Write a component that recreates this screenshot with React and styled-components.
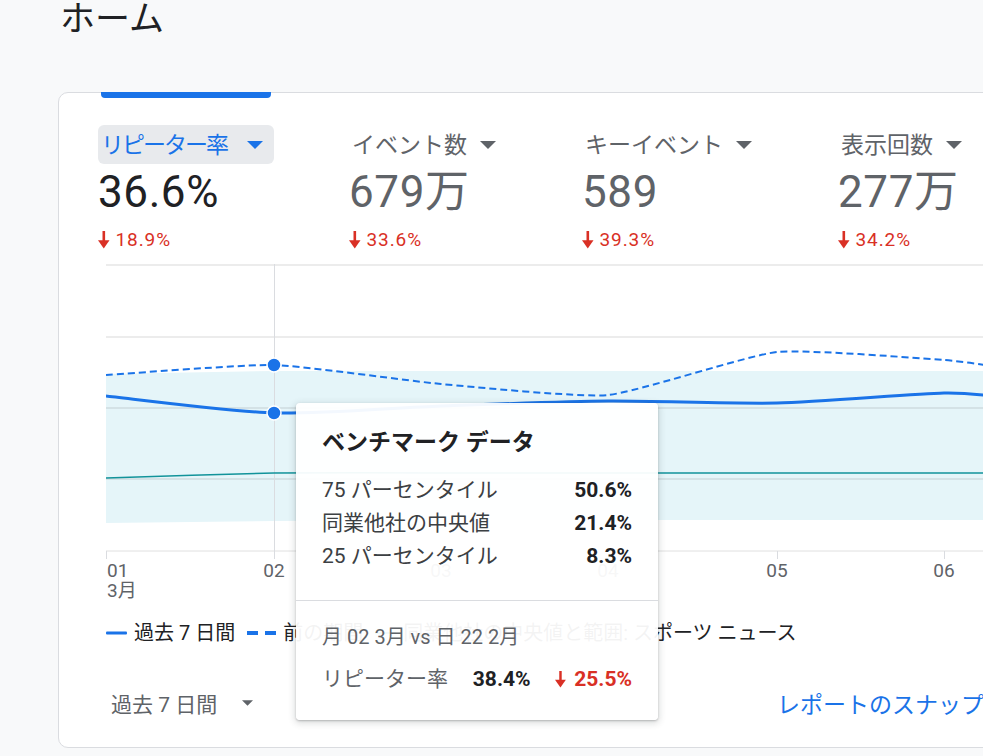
import React from 'react';
import styled, { createGlobalStyle } from 'styled-components';

const GlobalStyle = createGlobalStyle`
  html, body {
    margin: 0;
    padding: 0;
    background: #f8f9fa;
    overflow: hidden;
  }
  body {
    font-family: Roboto, "Noto Sans CJK JP", "Noto Sans", sans-serif;
    color: #202124;
  }
`;

const metrics = [
  { label: 'リピーター率', value: '36.6%', change: '18.9%', active: true },
  { label: 'イベント数', value: '679万', change: '33.6%' },
  { label: 'キーイベント', value: '589', change: '39.3%' },
  { label: '表示回数', value: '277万', change: '34.2%' },
];

const days = ['01', '02', '03', '04', '05', '06'];
const dayX = [0, 168, 335, 502, 671, 838];

const current = [[0, 132], [168, 149], [335, 142], [502, 137], [671, 139], [838, 129], [900, 134]];
const previous = [[0, 111], [168, 101], [335, 120], [502, 131], [671, 88], [838, 96], [900, 104]];
const median = [[0, 214], [168, 209], [335, 209], [502, 209], [671, 209], [838, 209], [900, 209]];
const bandTop = [[0, 110], [168, 107], [900, 107]];
const bandBottom = [[900, 256], [335, 256], [168, 257], [0, 259]];

// catmull-rom to bezier with a low tension, the chart lines are only softly rounded
const smooth = (pts, k = 12) => {
  let d = `M${pts[0][0]},${pts[0][1]}`;
  for (let i = 0; i < pts.length - 1; i++) {
    const p0 = pts[i - 1] || pts[i];
    const p1 = pts[i];
    const p2 = pts[i + 1];
    const p3 = pts[i + 2] || p2;
    const c1x = p1[0] + (p2[0] - p0[0]) / k;
    const c1y = p1[1] + (p2[1] - p0[1]) / k;
    const c2x = p2[0] - (p3[0] - p1[0]) / k;
    const c2y = p2[1] - (p3[1] - p1[1]) / k;
    d += ` C${c1x},${c1y} ${c2x},${c2y} ${p2[0]},${p2[1]}`;
  }
  return d;
};

const Page = styled.div`
  width: 983px;
  height: 756px;
  overflow: hidden;
  padding-left: 58px;
  box-sizing: border-box;
`;

const Title = styled.h1`
  margin: 0;
  padding-left: 2px;
  font-size: 35px;
  line-height: 40px;
  font-weight: 400;
  color: #202124;
`;

const Card = styled.section`
  margin-top: 52px;
  width: 1000px;
  height: 656px;
  box-sizing: border-box;
  background: #fff;
  border: 1px solid #dadce0;
  border-radius: 10px;
  display: flex;
  flex-direction: column;
`;

const TabIndicator = styled.div`
  margin: -1px 0 0 42px;
  width: 170px;
  height: 6px;
  background: #1a73e8;
  border-radius: 0 0 4px 4px;
`;

const Tabs = styled.div`
  display: flex;
  gap: 75px;
  margin: 27px 0 0 39px;
`;

const Tab = styled.div`
  display: flex;
  flex-direction: column;
  align-items: flex-start;
`;

const TabLabel = styled.div`
  display: inline-flex;
  align-items: center;
  box-sizing: border-box;
  height: 39px;
  padding: 0 11px 4px 3px;
  border-radius: 6px;
  background: ${(p) => (p.$active ? '#e8eaed' : 'transparent')};
  color: ${(p) => (p.$active ? '#1a73e8' : '#5f6368')};
  font-size: 23px;
  letter-spacing: ${(p) => (p.$active ? '-2px' : '0')};
  white-space: nowrap;

  svg {
    margin-left: ${(p) => (p.$active ? '20px' : '13px')};
    position: relative;
    top: 2px;
  }
`;

const Value = styled.div`
  margin-top: 4px;
  font-size: 44px;
  line-height: 48px;
  letter-spacing: 0.6px;
  color: ${(p) => (p.$active ? '#202124' : '#5f6368')};
  white-space: nowrap;
`;

const Change = styled.div`
  display: flex;
  align-items: center;
  gap: 6px;
  margin-top: 12px;
  font-size: 19px;
  line-height: 24px;
  letter-spacing: 0.9px;
  color: #d93025;
`;

const ChartWrap = styled.div`
  position: relative;
  margin: 12px 0 0 47px;
  height: 340px;
`;

const Tooltip = styled.div`
  position: absolute;
  z-index: 2;
  left: 190px;
  top: 139px;
  width: 362px;
  box-sizing: border-box;
  background: rgba(255, 255, 255, 0.95);
  border-radius: 4px;
  box-shadow: 0 1px 2px rgba(60, 64, 67, 0.3), 0 2px 6px 2px rgba(60, 64, 67, 0.15);
`;

const TipSection = styled.div`
  padding: ${(p) => (p.$footer ? '20px 26px 24px' : '24px 26px 27px')};
`;

const TipTitle = styled.div`
  font-size: 23px;
  line-height: 32px;
  font-weight: 700;
  color: #202124;
  margin-bottom: 15px;
`;

const TipRow = styled.div`
  display: flex;
  justify-content: space-between;
  align-items: center;
  font-size: 21px;
  line-height: 33px;
  color: ${(p) => (p.$muted ? '#5f6368' : '#3c4043')};
  margin-top: ${(p) => (p.$spaced ? '10px' : '0')};
  white-space: nowrap;
`;

const TipValue = styled.span`
  font-weight: 700;
  color: ${(p) => (p.$down ? '#d93025' : '#202124')};
  display: inline-flex;
  align-items: center;
  gap: 8px;
`;

const TipDivider = styled.div`
  height: 1px;
  background: #dadce0;
`;

const TipDate = styled.div`
  font-size: 20px;
  line-height: 32px;
  color: #5f6368;
`;

const Legend = styled.div`
  display: flex;
  align-items: center;
  gap: 12px;
  margin: 15px 0 0 47px;
  height: 28px;
  font-size: 20px;
  line-height: 28px;
  color: #202124;
  white-space: nowrap;
`;

const LegendItem = styled.div`
  display: flex;
  align-items: center;
  gap: 7px;
`;

const BottomRow = styled.div`
  display: grid;
  grid-template-columns: 718px auto;
  align-items: center;
  margin-top: 39px;
  height: 32px;
`;

const PeriodSelect = styled.div`
  display: flex;
  align-items: center;
  gap: 25px;
  padding-left: 52px;
  font-size: 21px;
  color: #5f6368;
`;

const SnapshotLink = styled.a`
  font-size: 23px;
  color: #1a73e8;
  text-decoration: none;
  white-space: nowrap;
`;

const Caret = ({ w = 16, h = 8, color }) => (
  <svg width={w} height={h} viewBox="0 0 16 8">
    <path d="M0 0h16L8 8z" fill={color} />
  </svg>
);

const DownArrow = ({ color = '#d93025', h = 18 }) => (
  <svg width={h * 0.64} height={h} viewBox="0 0 11.5 18">
    <rect x="4.5" y="0" width="2.6" height="11" fill={color} />
    <path d="M0 9.2h11.5L5.75 17.6z" fill={color} />
  </svg>
);

function Chart() {
  const band =
    'M' + bandTop.map((p) => p.join(',')).join(' L') + ' L' + bandBottom.map((p) => p.join(',')).join(' L') + ' Z';

  return (
    <svg width="900" height="340" style={{ display: 'block' }}>
      <path d={band} fill="#e5f5f9" />
      {[1, 73, 144, 215].map((y) => (
        <line key={y} x1="0" x2="900" y1={y} y2={y} stroke="rgba(0,0,0,0.1)" strokeWidth="1.4" />
      ))}
      <line x1="0" x2="900" y1="287" y2="287" stroke="#e0e0e0" strokeWidth="1" />
      {dayX.map((x) => (
        <line key={x} x1={x + 0.5} x2={x + 0.5} y1="287" y2="295" stroke="#dadce0" strokeWidth="1" />
      ))}
      <line x1="168.5" x2="168.5" y1="0" y2="287" stroke="#dadce0" strokeWidth="1" />
      <path d={smooth(median)} fill="none" stroke="#12939a" strokeWidth="1.5" />
      <path d={smooth(previous)} fill="none" stroke="#1a73e8" strokeWidth="2" strokeDasharray="7 4" />
      <path d={smooth(current, 8)} fill="none" stroke="#1a73e8" strokeWidth="3" />
      <circle cx="168" cy="101" r="7" fill="#1a73e8" stroke="#fff" strokeWidth="1.5" />
      <circle cx="168" cy="149" r="7" fill="#1a73e8" stroke="#fff" strokeWidth="1.5" />
      <g fontFamily="Roboto, sans-serif" fontSize="19" fill="#5f6368">
        {days.map((d, i) => (
          <text key={d} x={i === 0 ? 1 : dayX[i]} y="313" textAnchor={i === 0 ? 'start' : 'middle'}>
            {d}
          </text>
        ))}
        <text x="1" y="333" fontFamily='Roboto, "Noto Sans CJK JP", sans-serif'>3月</text>
      </g>
    </svg>
  );
}

export default function App() {
  return (
    <>
      <GlobalStyle />
      <Page>
        <Title>ホーム</Title>
        <Card>
          <TabIndicator />
          <Tabs>
            {metrics.map((m) => (
              <Tab key={m.label}>
                <TabLabel $active={m.active}>
                  {m.label}
                  <Caret color={m.active ? '#1a73e8' : '#5f6368'} />
                </TabLabel>
                <Value $active={m.active}>{m.value}</Value>
                <Change>
                  <DownArrow />
                  {m.change}
                </Change>
              </Tab>
            ))}
          </Tabs>

          <ChartWrap>
            <Chart />
            <Tooltip>
              <TipSection>
                <TipTitle>ベンチマーク データ</TipTitle>
                <TipRow>
                  <span>75 パーセンタイル</span>
                  <TipValue>50.6%</TipValue>
                </TipRow>
                <TipRow>
                  <span>同業他社の中央値</span>
                  <TipValue>21.4%</TipValue>
                </TipRow>
                <TipRow>
                  <span>25 パーセンタイル</span>
                  <TipValue>8.3%</TipValue>
                </TipRow>
              </TipSection>
              <TipDivider />
              <TipSection $footer>
                <TipDate>月 02 3月 vs 日 22 2月</TipDate>
                <TipRow $muted $spaced>
                  <span>リピーター率</span>
                  <TipValue>38.4%</TipValue>
                  <TipValue $down>
                    <DownArrow h={17} />
                    25.5%
                  </TipValue>
                </TipRow>
              </TipSection>
            </Tooltip>
          </ChartWrap>

          <Legend>
            <LegendItem>
              <svg width="21" height="4">
                <rect y="0.5" width="21" height="3" rx="1" fill="#1a73e8" />
              </svg>
              過去 7 日間
            </LegendItem>
            <LegendItem>
              <svg width="29" height="4">
                <rect width="11" height="4" fill="#1a73e8" />
                <rect x="18" width="11" height="4" fill="#1a73e8" />
              </svg>
              前の期間
            </LegendItem>
            <LegendItem>
              <svg width="21" height="12">
                <rect width="21" height="12" fill="#e5f5f9" />
                <rect y="5" width="21" height="2" fill="#12939a" />
              </svg>
              同業他社の中央値と範囲: スポーツ ニュース
            </LegendItem>
          </Legend>

          <BottomRow>
            <PeriodSelect>
              過去 7 日間
              <Caret w={11} h={6} color="#5f6368" />
            </PeriodSelect>
            <SnapshotLink href="#">レポートのスナップショットを表示</SnapshotLink>
          </BottomRow>
        </Card>
      </Page>
    </>
  );
}
